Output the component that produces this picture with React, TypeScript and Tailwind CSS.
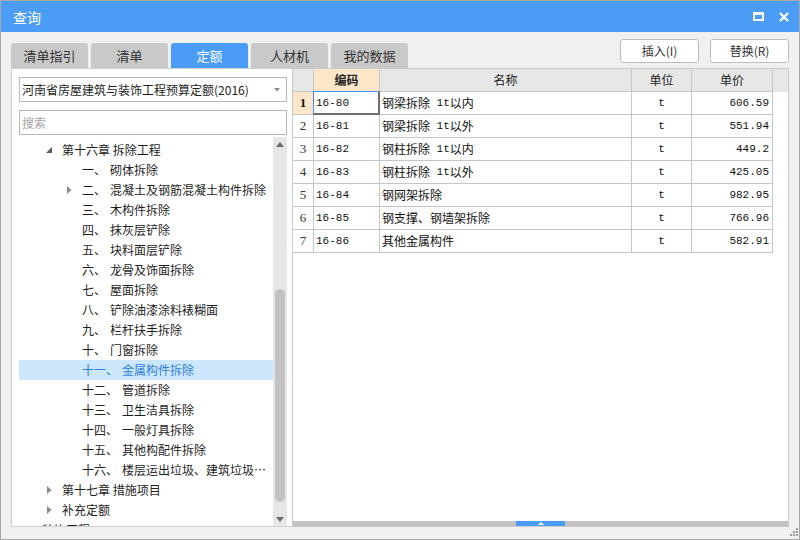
import React from "react";

const cjk = "font-['Noto_Sans_CJK_SC','Liberation_Sans',sans-serif]";
const mono = "font-['Liberation_Mono',monospace] text-[11px]";

interface ITreeItem {
  level: number;
  num?: string;
  text: string;
  arrow?: "open" | "closed";
  selected?: boolean;
}

const treeItems: ITreeItem[] = [
  { level: 1, text: "第十六章 拆除工程", arrow: "open" },
  { level: 2, num: "一、", text: "砌体拆除" },
  { level: 2, num: "二、", text: "混凝土及钢筋混凝土构件拆除", arrow: "closed" },
  { level: 2, num: "三、", text: "木构件拆除" },
  { level: 2, num: "四、", text: "抹灰层铲除" },
  { level: 2, num: "五、", text: "块料面层铲除" },
  { level: 2, num: "六、", text: "龙骨及饰面拆除" },
  { level: 2, num: "七、", text: "屋面拆除" },
  { level: 2, num: "八、", text: "铲除油漆涂料裱糊面" },
  { level: 2, num: "九、", text: "栏杆扶手拆除" },
  { level: 2, num: "十、", text: "门窗拆除" },
  { level: 2, num: "十一、", text: "金属构件拆除", selected: true },
  { level: 2, num: "十二、", text: "管道拆除" },
  { level: 2, num: "十三、", text: "卫生洁具拆除" },
  { level: 2, num: "十四、", text: "一般灯具拆除" },
  { level: 2, num: "十五、", text: "其他构配件拆除" },
  { level: 2, num: "十六、", text: "楼层运出垃圾、建筑垃圾外运" },
  { level: 1, text: "第十七章 措施项目", arrow: "closed" },
  { level: 1, text: "补充定额", arrow: "closed" },
  { level: 0, text: "装饰工程" },
];

const rows = [
  { code: "16-80", name: "钢梁拆除 1t以内", unit: "t", price: "606.59" },
  { code: "16-81", name: "钢梁拆除 1t以外", unit: "t", price: "551.94" },
  { code: "16-82", name: "钢柱拆除 1t以内", unit: "t", price: "449.2" },
  { code: "16-83", name: "钢柱拆除 1t以外", unit: "t", price: "425.05" },
  { code: "16-84", name: "钢网架拆除", unit: "t", price: "982.95" },
  { code: "16-85", name: "钢支撑、钢墙架拆除", unit: "t", price: "766.96" },
  { code: "16-86", name: "其他金属构件", unit: "t", price: "582.91" },
];

const tabs = ["清单指引", "清单", "定额", "人材机", "我的数据"];

const indentClass = ["pl-[3px]", "pl-[23px]", "pl-[43px]"];

// ascii runs in the grid use the narrow mono face, like the original SimSun cells
const MixedText: React.FC<{ text: string }> = ({ text }) => {
  const parts = text.split(/([\x20-\x7e]+)/).filter(Boolean);
  return (
    <>
      {parts.map((p, i) =>
        /^[\x20-\x7e]+$/.test(p) ? (
          <span key={i} className={`${mono} whitespace-pre`}>
            {p}
          </span>
        ) : (
          <span key={i}>{p}</span>
        )
      )}
    </>
  );
};

const TreeRow: React.FC<{ item: ITreeItem }> = ({ item }) => {
  return (
    <div
      className={`flex items-center h-[20px] shrink-0 pr-[6px] ${indentClass[item.level]} ${
        item.selected ? "bg-[#cce6fb] text-[#2f80dc]" : "text-[#1e1e1e]"
      }`}
    >
      <span className="w-[14px] h-[20px] flex items-center justify-center shrink-0">
        {item.arrow === "open" && (
          <svg width="6" height="6" viewBox="0 0 6 6">
            <polygon points="6,0 6,6 0,6" fill="#595959" />
          </svg>
        )}
        {item.arrow === "closed" && (
          <svg width="5" height="8" viewBox="0 0 5 8">
            <polygon points="0,0 4.5,4 0,8" fill="#8a8a8a" />
          </svg>
        )}
      </span>
      <span className="ml-[6px] flex min-w-0 items-center">
        {item.num && <span className="mr-[4px] shrink-0">{item.num}</span>}
        <span className="truncate">{item.text}</span>
      </span>
    </div>
  );
};

const App: React.FC = () => {
  return (
    <div
      className={`w-[800px] h-[540px] flex flex-col bg-[#f0f0f0] border border-[#a9a9a9] overflow-hidden ${cjk}`}
    >
      {/* title bar */}
      <div className="h-[31px] shrink-0 bg-[#4a9cf7] flex items-center pl-[12px] pr-[10px]">
        <span className="text-white text-[14px] leading-[20px]">查询</span>
        <div className="ml-auto flex items-center gap-[15px]">
          <div className="w-[11px] h-[9px] border-2 border-t-[3px] border-white" />
          <svg width="10" height="10" viewBox="0 0 10 10">
            <path d="M1 1 L9 9 M9 1 L1 9" stroke="#fff" strokeWidth="2.2" />
          </svg>
        </div>
      </div>

      {/* body */}
      <div className="flex-1 flex flex-col pt-[7px] px-[10px] pb-[12px] min-h-0">
        <div className="h-[29px] shrink-0 flex items-end">
          <div className="flex gap-[3px]">
            {tabs.map((t) => (
              <div
                key={t}
                className={`w-[77px] h-[25px] rounded-t-[3px] flex items-center justify-center text-[13px] leading-[18px] ${
                  t === "定额" ? "bg-[#4a9cf7] text-white" : "bg-[#c9c9c9] text-[#333]"
                }`}
              >
                {t}
              </div>
            ))}
          </div>
          <div className="ml-auto self-start flex gap-[11px]">
            <button className="w-[79px] h-[24px] bg-white border border-[#bdbdbd] rounded-[3px] text-[12px] text-[#333] leading-[16px]">
              插入(I)
            </button>
            <button className="w-[79px] h-[24px] bg-white border border-[#bdbdbd] rounded-[3px] text-[12px] text-[#333] leading-[16px]">
              替换(R)
            </button>
          </div>
        </div>

        <div className="flex-1 flex min-h-0">
          {/* left panel */}
          <div className="w-[282px] shrink-0 bg-white border border-[#cfcfcf] flex flex-col pl-[7px] pr-[5px] min-h-0">
            <div className="mt-[8px] h-[25px] shrink-0 border border-[#b9b9b9] flex items-center pl-[2px] pr-[6px] text-[12px] leading-[16px] text-[#1e1e1e]">
              <span>河南省房屋建筑与装饰工程预算定额(2016)</span>
              <svg className="ml-auto" width="6" height="4" viewBox="0 0 6 4">
                <polygon points="0,0 6,0 3,3.5" fill="#8a8a8a" />
              </svg>
            </div>
            <div className="mt-[8px] h-[25px] shrink-0 border border-[#b9b9b9] flex items-center pl-[2px] text-[12px] leading-[16px] text-[#a6a6a6]">
              搜索
            </div>
            <div className="mt-[2px] flex-1 flex min-h-0 overflow-hidden">
              <div className="flex-1 min-w-0 flex flex-col pt-[3px] text-[12px] leading-[18px] overflow-hidden">
                {treeItems.map((it, i) => (
                  <TreeRow key={i} item={it} />
                ))}
              </div>
              <div className="w-[14px] shrink-0 bg-[#e6e6e6] flex flex-col items-center">
                <div className="h-[14px] flex items-center justify-center">
                  <svg width="8" height="5" viewBox="0 0 8 5">
                    <polygon points="4,0 8,5 0,5" fill="#6b6b6b" />
                  </svg>
                </div>
                <div className="h-[138px]" />
                <div className="w-[10px] h-[213px] rounded-full bg-[#c2c2c2]" />
                <div className="flex-1" />
                <div className="h-[14px] flex items-center justify-center">
                  <svg width="8" height="5" viewBox="0 0 8 5">
                    <polygon points="0,0 8,0 4,5" fill="#6b6b6b" />
                  </svg>
                </div>
              </div>
            </div>
          </div>

          {/* right panel */}
          <div className="flex-1 ml-[-1px] bg-white border border-[#c9c9c9] flex flex-col min-w-0">
            <div className="flex-1 min-h-0">
              <div className="flex h-[23px] bg-[#e7e7e7] text-[12px] text-[#222] leading-[16px]">
                <div className="w-[21px] border-r border-b border-[#c6c6c6]" />
                <div className="w-[66px] border-r border-b border-[#c6c6c6] bg-[#fde6c9] font-bold flex items-center justify-center">
                  编码
                </div>
                <div className="w-[252px] border-r border-b border-[#c6c6c6] flex items-center justify-center">
                  名称
                </div>
                <div className="w-[60px] border-r border-b border-[#c6c6c6] flex items-center justify-center">
                  单位
                </div>
                <div className="w-[81px] border-r border-b border-[#c6c6c6] flex items-center justify-center">
                  单价
                </div>
              </div>
              {rows.map((r, i) => (
                <div key={r.code} className="flex h-[23px] text-[12px] text-[#111] leading-[16px]">
                  <div
                    className={`w-[21px] border-r border-b border-[#c6c6c6] flex items-center justify-center font-['Liberation_Serif',serif] text-[13px] ${
                      i === 0 ? "bg-[#fde6c9] font-bold" : "text-[#333]"
                    }`}
                  >
                    {i + 1}
                  </div>
                  <div
                    className={`relative w-[66px] border-r border-b border-[#c6c6c6] flex items-center pl-[2px] ${mono}`}
                  >
                    {r.code}
                    {i === 0 && (
                      <div className="absolute -left-[1px] -top-[1px] right-[-1px] bottom-[-1px] border-l border-t border-[#3f8ff5] border-r-2 border-b-2 border-r-[#6f6f6f] border-b-[#6f6f6f]" />
                    )}
                  </div>
                  <div className="w-[252px] border-r border-b border-[#c6c6c6] flex items-center pl-[2px]">
                    <MixedText text={r.name} />
                  </div>
                  <div className={`w-[60px] border-r border-b border-[#c6c6c6] flex items-center justify-center ${mono}`}>
                    {r.unit}
                  </div>
                  <div className={`w-[81px] border-r border-b border-[#c6c6c6] flex items-center justify-end pr-[3px] ${mono}`}>
                    {r.price}
                  </div>
                </div>
              ))}
            </div>
            <div className="h-[5px] shrink-0 bg-[#c3c3c3] flex justify-center">
              <div className="w-[49px] h-[5px] bg-[#4a9cf7] flex items-center justify-center">
                <svg width="6" height="3" viewBox="0 0 6 3">
                  <polygon points="3,0 6,3 0,3" fill="#fff" />
                </svg>
              </div>
            </div>
          </div>
        </div>
      </div>

      {/* resize grip */}
      <div className="relative h-0">
        <svg className="absolute right-[1px] bottom-[3px]" width="9" height="9" viewBox="0 0 9 9">
          <rect x="7" y="1" width="2" height="2" fill="#9a9a9a" />
          <rect x="4" y="4" width="2" height="2" fill="#9a9a9a" />
          <rect x="7" y="4" width="2" height="2" fill="#9a9a9a" />
          <rect x="1" y="7" width="2" height="2" fill="#9a9a9a" />
          <rect x="4" y="7" width="2" height="2" fill="#9a9a9a" />
          <rect x="7" y="7" width="2" height="2" fill="#9a9a9a" />
        </svg>
      </div>
    </div>
  );
};

export default App;
